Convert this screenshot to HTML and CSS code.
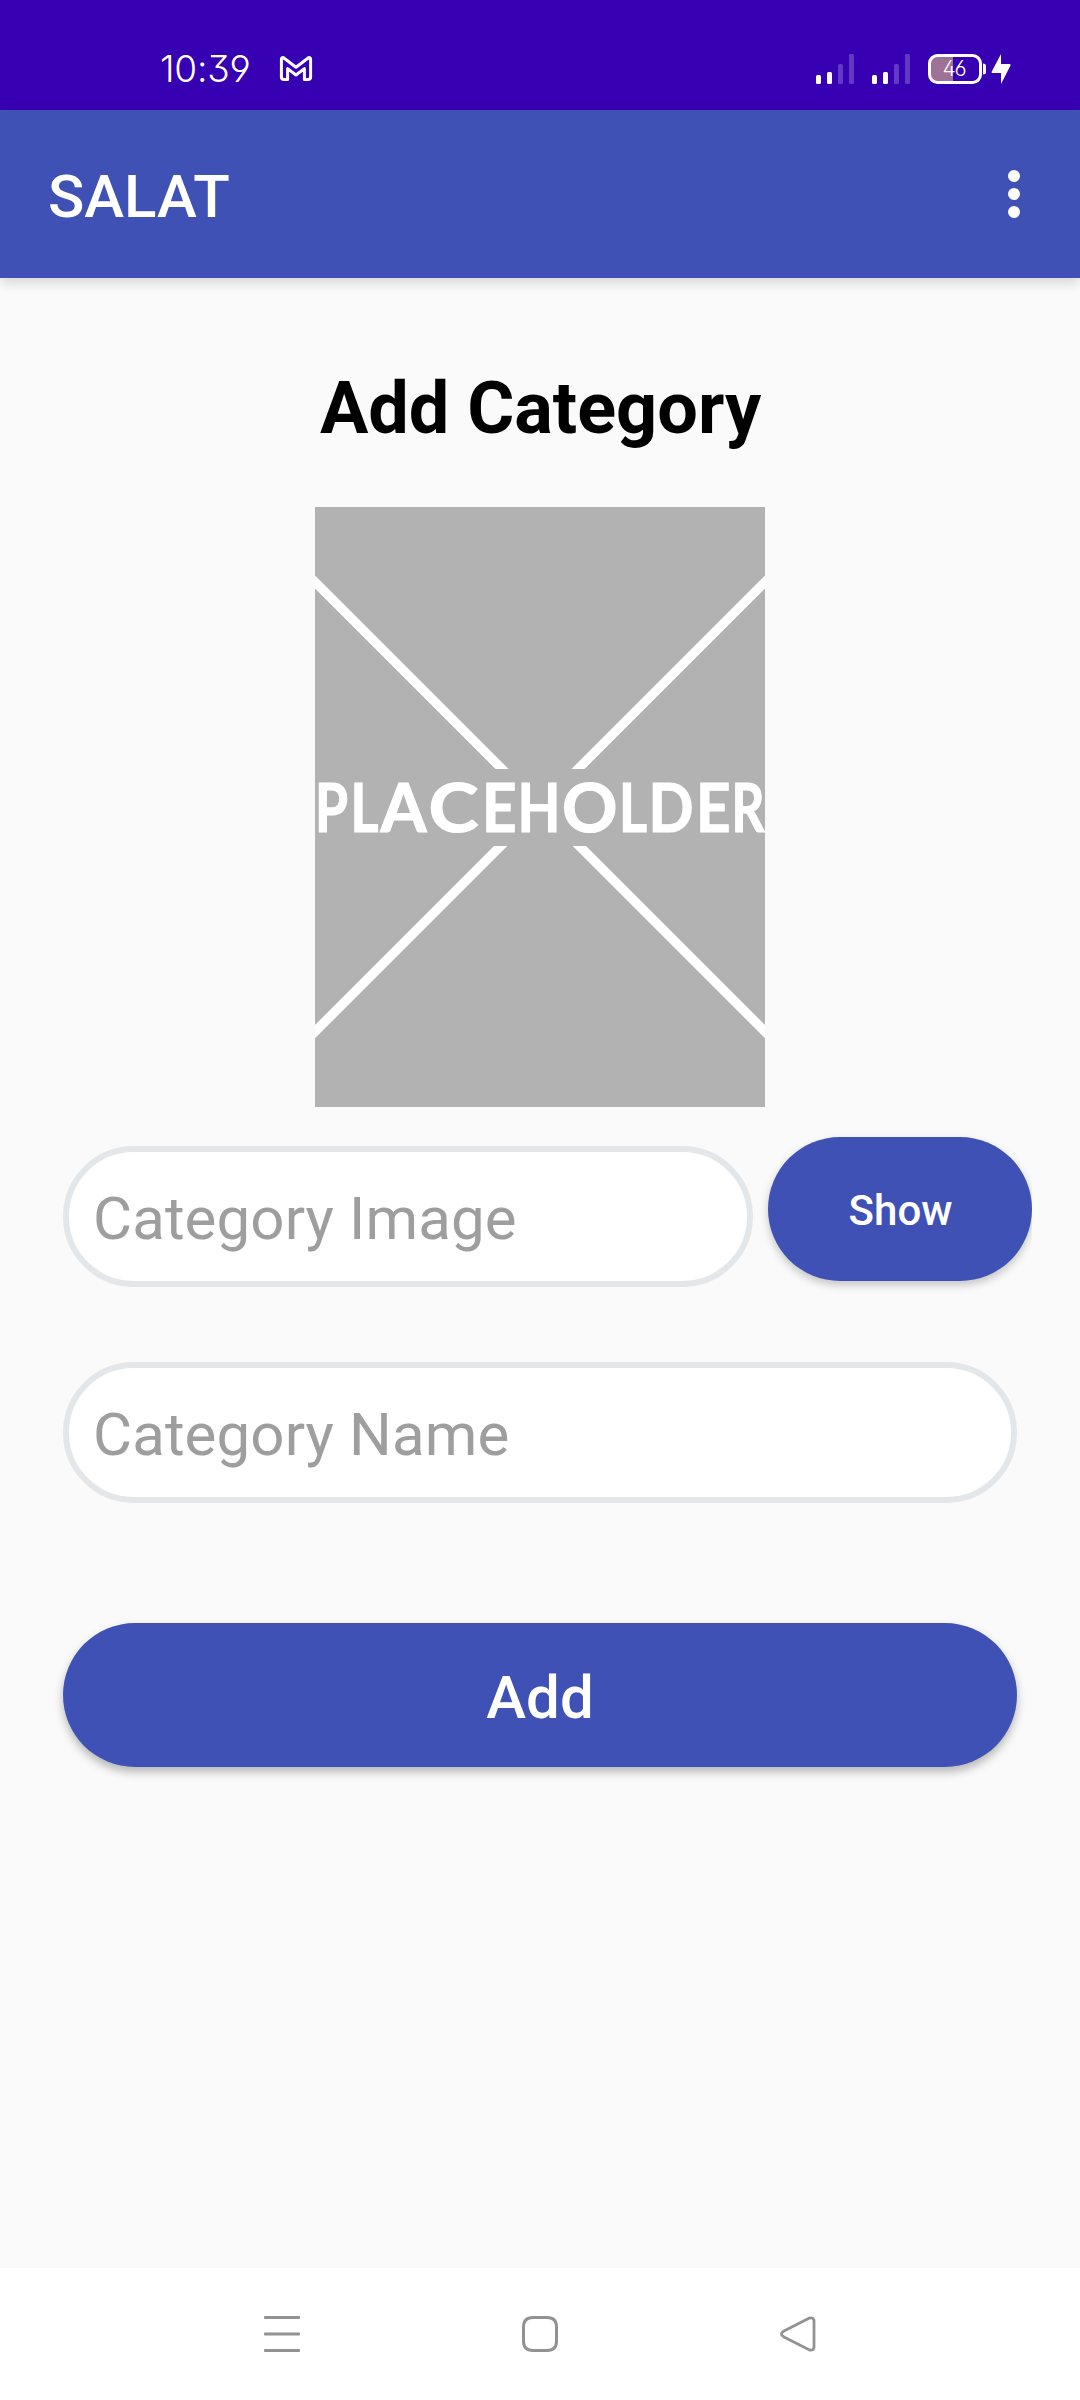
FILE: index.html
```html
<!DOCTYPE html>
<html lang="en">
<head>
<meta charset="utf-8">
<title>SALAT</title>
<link rel="stylesheet" href="styles.css">
</head>
<body>
<div class="screen">
  <header class="status">
    <span class="clock">10:39</span>
    <svg class="mail" width="34" height="28" viewBox="0 0 34 28"><path d="M4.2 2.5 L17 12.2 L29.8 2.5 Q31.6 2.5 31.6 4.6 V22 Q31.6 24.6 29 24.6 H25.4 V13.6 L17 20 L8.6 13.6 V24.6 H5 Q2.4 24.6 2.4 22 V4.6 Q2.4 2.5 4.2 2.5 Z" fill="none" stroke="#fff" stroke-width="3" stroke-linejoin="round"/></svg>
    <div class="indicators">
      <svg class="signal" width="38" height="30" viewBox="0 0 38 30"><g fill="#fff"><rect x="0" y="21" width="5" height="9" rx="1.5"/><rect x="11" y="18" width="5" height="12" rx="1.5"/><g opacity=".22"><rect x="22" y="10" width="5" height="20" rx="1.5"/><rect x="33" y="0" width="5" height="30" rx="1.5"/></g></g></svg>
      <svg class="signal" width="38" height="30" viewBox="0 0 38 30"><g fill="#fff"><rect x="0" y="21" width="5" height="9" rx="1.5"/><rect x="11" y="18" width="5" height="12" rx="1.5"/><g opacity=".22"><rect x="22" y="10" width="5" height="20" rx="1.5"/><rect x="33" y="0" width="5" height="30" rx="1.5"/></g></g></svg>
      <svg class="battery" width="83" height="30" viewBox="0 0 83 30">
        <path d="M25 2 H9 Q2 2 2 9 V21 Q2 28 9 28 H25 Z" fill="#9e7296"/>
        <rect x="1.5" y="1.5" width="51" height="27" rx="8" fill="none" stroke="#fff" stroke-width="3"/>
        <path d="M55 9.5 Q58 9.5 58 12 V18 Q58 20.500 55 20.500 Z" fill="#fff"/>
        <text class="level" x="14.500" y="22.300" textLength="24">46</text>
        <path d="M73 0 L63.500 18 Q63.500 19 64.500 19 H73 V30 L82.500 11.500 Q83 10 81.500 10 H73 Z" fill="#fff"/>
      </svg>
    </div>
  </header>

  <div class="appbar">
    <h1 class="app-title">SALAT</h1>
    <svg width="12" height="48" viewBox="0 0 12 48" fill="#fff"><circle cx="6" cy="6" r="6"/><circle cx="6" cy="24" r="6"/><circle cx="6" cy="42" r="6"/></svg>
  </div>

  <main class="content">
    <h2 class="heading">Add Category</h2>
    <svg class="preview" width="450" height="600" viewBox="0 0 450 600">
      <rect width="450" height="600" fill="#b2b2b2"/>
      <g fill="#fff">
        <path d="M0 68.500 L193.500 262 H180.500 L0 81.500Z"/>
        <path d="M450 68.500 L256.500 262 H269.500 L450 81.500Z"/>
        <path d="M0 518 L179 339 H192.300 L0 531.300Z"/>
        <path d="M450 518 L271 339 H257.700 L450 531.300Z"/>
        <text class="preview-label" y="324.500"><tspan x="0" textLength="33" lengthAdjust="spacingAndGlyphs">P</tspan><tspan x="35.500" textLength="28" lengthAdjust="spacingAndGlyphs">L</tspan><tspan x="65.500" textLength="46" lengthAdjust="spacingAndGlyphs">A</tspan><tspan x="113.500" textLength="50" lengthAdjust="spacingAndGlyphs">C</tspan><tspan x="167" textLength="34.500" lengthAdjust="spacingAndGlyphs">E</tspan><tspan x="202.500" textLength="43" lengthAdjust="spacingAndGlyphs">H</tspan><tspan x="247" textLength="55.500" lengthAdjust="spacingAndGlyphs">O</tspan><tspan x="304" textLength="28" lengthAdjust="spacingAndGlyphs">L</tspan><tspan x="333.500" textLength="45" lengthAdjust="spacingAndGlyphs">D</tspan><tspan x="381" textLength="34.500" lengthAdjust="spacingAndGlyphs">E</tspan><tspan x="416.500" textLength="33" lengthAdjust="spacingAndGlyphs">R</tspan></text>
      </g>
    </svg>
    <div class="image-row">
      <div class="field field-image">Category Image</div>
      <div class="show-wrap"><button class="btn btn-show">Show</button></div>
    </div>
    <div class="field field-name">Category Name</div>
    <button class="btn btn-add">Add</button>
  </main>

  <nav class="navbar">
    <svg width="36" height="36" viewBox="0 0 36 36" fill="#929292"><rect width="36" height="3" rx="1"/><rect y="16.500" width="36" height="3" rx="1"/><rect y="33" width="36" height="3" rx="1"/></svg>
    <svg width="36" height="36" viewBox="0 0 36 36" fill="none" stroke="#929292" stroke-width="3"><path d="M11 1.500 H25 Q34.500 1.500 34.500 11 V25 Q34.500 34.500 25 34.500 H11 Q1.500 34.500 1.500 25 V11 Q1.500 1.500 11 1.500Z"/></svg>
    <svg width="36" height="36" viewBox="0 0 36 36" fill="none" stroke="#929292" stroke-width="2.800"><path d="M29 2.200 L3.500 15.300 Q-0.500 18 3.500 20.700 L29 33.800 Q33.500 35 34 31.500 V4.500 Q33.500 1 29 2.200Z"/></svg>
  </nav>
</div>
</body>
</html>
```

FILE: styles.css
```css
* { box-sizing: border-box; }
body { margin: 0; background: #fafafa; font-family: Roboto, sans-serif; }
h1, h2 { margin: 0; }
svg { display: block; flex: none; }

.screen { width: 1080px; height: 2400px; display: flex; flex-direction: column; overflow: hidden; }

.status {
  height: 110px; flex: none; background: #3700b3; color: #fff;
  display: flex; align-items: flex-start; padding: 54px 69px 0 160px;
}
.clock {
  width: 119px; font: 350 37px/30px Inter, sans-serif; letter-spacing: -.2px;
  font-feature-settings: "ss01", "cv09"; white-space: nowrap;
}
.mail { margin-top: 1px; }
.indicators { display: flex; margin-left: auto; }
.signal { margin-right: 18px; }
.level { font: 350 21px Inter, sans-serif; fill: #fff; font-feature-settings: "ss01"; }

.appbar {
  height: 168px; flex: none; background: #3f51b5; color: #fff;
  display: flex; align-items: center; justify-content: space-between;
  padding: 0 60px 0 48px; position: relative;
  box-shadow: 0 4px 12px rgba(0, 0, 0, .16);
}
.app-title { font-size: 60px; font-weight: 500; line-height: 70px; padding-top: 5px; }

.content { flex: 1; display: flex; flex-direction: column; }
.heading {
  margin-top: 89px; padding-left: 1px; font-size: 72px; line-height: 84px; font-weight: 700;
  text-align: center; color: #000;
}
.preview { margin: 56px auto 0; }
.preview-label { font: 700 66px Lato, sans-serif; stroke: #fff; stroke-width: 1.2px; }

.image-row { display: flex; align-items: flex-start; gap: 15px; margin: 30px 48px 0 63px; }
.field {
  height: 141px; border: 6px solid #e3e7ea; border-radius: 71px; background: #fff;
  padding: 32px 0 0 24px; font-size: 60px; line-height: 70px; letter-spacing: .1px;
  color: #9e9e9e; white-space: nowrap;
}
.field-image { width: 690px; margin-top: 9px; }
.field-name { margin: 75px 63px 0; }

.btn {
  display: block; width: 100%; height: 144px; padding: 0; border: 0; border-radius: 72px;
  background: #3f51b5; color: #fff; font-family: Roboto, sans-serif; font-weight: 500;
  box-shadow: 0 4px 8px rgba(0, 0, 0, .22);
}
.show-wrap { width: 264px; clip-path: inset(-20px 0 -20px -20px); }
.btn-show { font-size: 42px; padding: 3px 0 0 1px; }
.btn-add { width: auto; margin: 120px 63px 0; font-size: 60px; padding-top: 4px; box-shadow: 0 5px 10px rgba(0, 0, 0, .28); }

.navbar {
  height: 132px; flex: none; background: #fff;
  display: flex; justify-content: space-between; padding: 48px 264px 0;
}
```
